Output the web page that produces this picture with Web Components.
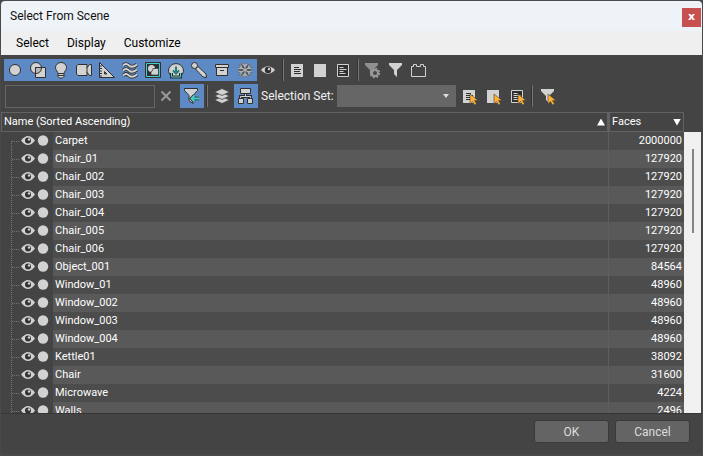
<!DOCTYPE html>
<html lang="en">
<head>
<meta charset="utf-8">
<title>Select From Scene</title>
<style>
html, body { margin: 0; height: 100%; }
body { background: #4a4a4a; font-family: Roboto, "Noto Sans", sans-serif; font-size: 12px; }
</style>
</head>
<body>
<scene-dialog></scene-dialog>
<script>
const D = 'stroke="#303030" stroke-width="1"';
const L = '#d2d2d2';
const cursor = '<path d="M12 9v10l2.500-2.500 2 3.500 2-1-2-3.500h3.500z" fill="#ffb02e" stroke="#454545" stroke-width=".6"/>';
const wave = y => `<path d="M4 ${y}q3-3 6 0t8-1" fill="none" stroke="#303030" stroke-width="3.600"/><path d="M4 ${y}q3-3 6 0t8-1" fill="none" stroke="${L}" stroke-width="1.800"/>`;
const arms = [0, 60, 120, 180, 240, 300].map(a => `<path transform="rotate(${a} 11 11)" d="M11 11V4M8.500 4.500l2.500 3L13.500 4.500"/>`).join('');
const ICONS = {
  circle: `<circle cx="11" cy="11" r="5.500" fill="${L}" ${D}/>`,
  shapes: `<circle cx="9" cy="9" r="5.500" fill="${L}" ${D}/><path d="M8.500 8.500h10v10h-10z" fill="${L}" ${D}/><path d="M8.500 8.500h6a5.500 5.500 0 0 1-6 6z" fill="#b8b8b8" ${D}/>`,
  bulb: `<path d="M8 14.500c0-2-2.500-3-2.500-6a5.500 5 0 0 1 11 0c0 3-2.500 4-2.500 6v3l-1.500 1.500h-3L8 17.500z" fill="${L}" ${D}/><path d="M8 14.500h6M8 16.500h6" ${D}/>`,
  camera: `<path d="M5 5.500h9v3l1-1h0l1.500-2h2v11h-2l-1.500-2h0l-1-1v3H5L3.500 15V7z" fill="${L}" ${D}/><path d="M14 8v6" ${D}/>`,
  ruler: `<path d="M3.500 3.500l15 15h-15z" fill="${L}" ${D}/><path d="M8.500 12.500l2.500 2.500H8.500z" fill="#5d88c0" ${D}/><path d="M4 7h2M4 9.500h2M4 12h2M4 14.500h2M4 17h2" ${D}/>`,
  waves: wave(6.5) + wave(11.5) + wave(16.5),
  group: `<path d="M3.500 3.500h15v15h-15z" fill="#1f5458" stroke="#303030"/><path d="M4.500 4.500h13v13h-13z" fill="#303030" stroke="#44cfc6"/><circle cx="9.500" cy="9.500" r="3.500" fill="${L}"/><path d="M11 9.500h5.500V16H9v-3.500q2 0 2-3z" fill="${L}" stroke="#303030" stroke-width=".7"/>`,
  xref: `<path d="M7 17.500A7.500 7 0 1 1 15 17.500z" fill="${L}" ${D}/><path d="M6.500 14v4h9v-4" fill="none" stroke="#303030" stroke-width="3"/><path d="M6.500 14v4h9v-4" fill="none" stroke="#44cfc6"/><path d="M11 7.500V14M8 11.500l3 3 3-3" fill="none" stroke="#247e7a" stroke-width="2"/>`,
  bone: `<path d="M7.500 10L10 7.500 18 15l.5 3.500L15 18z" fill="${L}" ${D}/><circle cx="6.500" cy="6.500" r="3" fill="${L}" ${D}/>`,
  box: `<path d="M5.500 8.500h11v8h-11z" fill="${L}" ${D}/><path d="M4.500 5.500h13v3h-13z" fill="${L}" ${D}/><path d="M9 11.500h4" ${D}/>`,
  snow: `<g fill="none" stroke="#3f464f" stroke-width="2.600">${arms}</g><g fill="none" stroke="#b4b4b4" stroke-width="1.200">${arms}</g>`,
  eye: `<path d="M4 11q7-7.500 14 0-7 7.500-14 0z" fill="${L}"/><circle cx="11" cy="11" r="3.200" fill="#303030"/><circle cx="12" cy="10" r="1.200" fill="${L}"/>`,
  page: `<path d="M5 5h12v13H5z" fill="${L}"/><path d="M8 8.500h5M8 10.500h7M8 12.500h6M8 14.500h7" ${D}/>`,
  blank: `<path d="M5 5h12v13H5z" fill="${L}"/>`,
  pageDark: `<path d="M5.500 5.500h11v12h-11z" fill="#303030" stroke="${L}"/><path d="M7.500 8.500h4M7.500 10.500h7M7.500 12.500h4M7.500 14.500h6" stroke="${L}"/>`,
  filterGear: `<path d="M4 4h13v2l-5 5v7l-3-2v-5L4 6z" fill="#8f8f8f"/><circle cx="14" cy="14" r="3" fill="#454545" stroke="#999" stroke-width="2"/><circle cx="14" cy="14" r="4.500" fill="none" stroke="#999" stroke-width="1.500" stroke-dasharray="2 1.500"/>`,
  filter: `<path d="M5 4h13v2l-5 5v7l-3-3v-4L5 6z" fill="${L}"/>`,
  brick: `<path d="M4.500 7.500h2v-2h3v2h4v-2h3v2h2v10h-14z" fill="none" stroke="${L}" stroke-width="1"/>`,
  clear: `<path d="M6.500 6.500l9 9M15.500 6.500l-9 9" stroke="#9a9a9a" stroke-width="2"/>`,
  filterBack: `<path d="M4.500 3.500h13v2l-4.500 5v8l-4-3v-5l-4.500-5z" fill="${L}" ${D}/><path d="M19 13.500h-7M14.500 10.500l-3 3 3 3" fill="none" stroke="#303030" stroke-width="3.500"/><path d="M19 13.500h-7M14.500 10.500l-3 3 3 3" fill="none" stroke="#44cfc6" stroke-width="1.800"/>`,
  layers: `<g fill="${L}" stroke="#454545" stroke-width=".8"><path d="M11 11.500l7.500 3.500-7.500 3.500L3.500 15z"/><path d="M11 7.500l7.500 3.500-7.500 3.500L3.500 11z"/><path d="M11 3.500L18.500 7 11 10.500 3.500 7z"/></g>`,
  tree: `<path d="M11.500 8v3.500M6.500 14v-2.500h10V14" fill="none" stroke="#303030" stroke-width="3"/><path d="M11.500 8v3.500M6.500 14v-2.500h10V14" fill="none" stroke="${L}"/><path d="M6.500 3.500h10v5h-10zM4.500 13.500h5v5h-5zM13.500 13.500h5v5h-5z" fill="${L}" ${D}/>`,
};
ICONS.pageCursor = ICONS.page + cursor;
ICONS.blankCursor = ICONS.blank + cursor;
ICONS.pageDarkCursor = ICONS.pageDark + cursor;
ICONS.filterCursor = ICONS.filter + cursor;

function define(name, html) {
  customElements.define(name, class extends HTMLElement {
    constructor() {
      super();
      this.attachShadow({ mode: 'open' }).innerHTML = typeof html === 'function' ? html(this) : html;
    }
  });
}

define('tool-button', el => `
<style>
:host { display: block; flex: none; }
button { display: block; width: 23px; height: 22px; border: 0; padding: 0; background: none; }
:host([pressed]) button { background: #5d8ac4; }
:host([tall]) button { width: 24px; height: 24px; padding: 1px 0; }
svg { display: block; width: 23px; height: 22px; }
</style>
<button type="button" aria-label="${el.getAttribute('label')}" aria-pressed="${el.hasAttribute('pressed')}"><svg viewBox="0 0 23 22" aria-hidden="true">${ICONS[el.getAttribute('icon')]}</svg></button>`);

define('tool-separator', `
<style>:host { display: block; flex: none; width: 1px; height: 22px; margin: 0 2px; background: #777; border-left: 1px solid #333; }</style>`);

define('title-bar', `
<style>
:host { display: flex; align-items: center; justify-content: space-between; height: 30px; padding: 0 1px 0 9px; background: #eef3f7; color: #111; border-radius: 4px 4px 0 0; }
h1 { margin: 0; font-size: 12px; font-weight: 400; line-height: 16px; }
button { width: 19px; height: 19px; margin-top: 3px; border: 0; padding: 0 0 2px; background: #c75050; color: #fff; font: 700 11px/16px "DejaVu Sans", sans-serif; }
</style>
<h1><slot></slot></h1><button type="button" aria-label="Close">x</button>`);

define('menu-bar', `
<style>
:host { display: flex; gap: 18px; align-items: center; height: 24px; padding: 0 15px; background: #efefef; }
button { border: 0; padding: 0; background: none; color: #000; font: inherit; line-height: 16px; }
</style>
<button type="button">Select</button><button type="button">Display</button><button type="button">Customize</button>`);

const tools = (list, flag = '') => list.map(([i, l]) => `<tool-button icon="${i}" label="${l}" ${flag}></tool-button>`).join('');

define('filter-toolbar', `
<style>:host { display: flex; padding: 4px 3px 3px; }</style>
${tools([['circle','Geometry'],['shapes','Shapes'],['bulb','Lights'],['camera','Cameras'],['ruler','Helpers'],['waves','Space warps'],['group','Groups'],['xref','Object XRefs'],['bone','Bones'],['box','Containers'],['snow','Frozen objects']], 'pressed')}
${tools([['eye','Hidden objects']])}
<tool-separator></tool-separator>
${tools([['page','Display all'],['blank','Display none'],['pageDark','Invert display']])}
<tool-separator></tool-separator>
${tools([['filterGear','Advanced filter'],['filter','Filter combination'],['brick','Layout']])}`);

define('search-toolbar', `
<style>
:host { display: flex; align-items: center; height: 24px; padding: 0 4px; color: #f0f0f0; }
input { box-sizing: border-box; flex: none; width: 150px; height: 23px; border: 1px solid #666; background: #444; color: #eee; padding: 0 4px; font: inherit; }
.find { display: flex; align-items: center; gap: 0 2px; }
.find input { margin-right: -2px; }
tool-separator { margin-right: 3px; }
label { flex: none; width: 79px; box-sizing: border-box; padding-left: 3px; line-height: 16px; white-space: nowrap; }
.combo { flex: none; display: grid; align-items: center; width: 119px; height: 22px; margin-right: 2px; background: #666; }
.combo > * { grid-area: 1 / 1; }
select { appearance: none; width: 100%; height: 22px; border: 0; background: none; color: #eee; font: inherit; padding: 0 16px 0 4px; }
.arrow { justify-self: end; width: 6px; height: 4px; margin-right: 7px; background: #ddd; clip-path: polygon(0 0, 100% 0, 50% 100%); pointer-events: none; }
.picks { display: flex; gap: 1px; }
</style>
<div class="find"><input type="search" aria-label="Find">
${tools([['clear','Clear search']])}
${tools([['filterBack','Select matches']], 'pressed tall')}</div>
<tool-separator></tool-separator>
${tools([['layers','Sort by layer']])}
${tools([['tree','Sort by hierarchy']], 'pressed tall')}
<label for="set">Selection Set:</label>
<div class="combo"><select id="set"><option></option></select><span class="arrow"></span></div>
<div class="picks">${tools([['pageCursor','Select all'],['blankCursor','Select none'],['pageDarkCursor','Select invert']])}</div>
<tool-separator></tool-separator>
${tools([['filterCursor','Select by filter']])}`);

const rows = [['Carpet',2000000],['Chair_01',127920],['Chair_002',127920],['Chair_003',127920],['Chair_004',127920],['Chair_005',127920],['Chair_006',127920],['Object_001',84564],['Window_01',48960],['Window_002',48960],['Window_003',48960],['Window_004',48960],['Kettle01',38092],['Chair',31600],['Microwave',4224],['Walls',2496]];
define('scene-table', `
<style>
:host { display: block; flex: 1; min-width: 0; overflow: hidden; color: #fff; font-size: 11px; line-height: 16px; }
table { width: 100%; table-layout: fixed; border-collapse: separate; border-spacing: 0; }
.tree { width: 52px; } .faces { width: 76px; }
th { box-sizing: border-box; height: 20px; padding: 0 2px; border: 1px solid #626262; text-align: left; font-weight: 400; }
th + th { border-left: 2px solid #626262; }
th div { display: flex; align-items: center; justify-content: space-between; }
th i { width: 8px; height: 7px; background: #fff; clip-path: polygon(50% 0, 100% 100%, 0 100%); }
th i.down { clip-path: polygon(0 0, 100% 0, 50% 100%); }
td { height: 18px; padding: 0 2px; line-height: 18px; overflow: hidden; white-space: nowrap; background: #4c4c4c; }
tbody tr:nth-child(even) td { background: #595959; }
tbody tr td.node { padding: 0; background: #444; }
td.node svg { display: block; width: 52px; height: 18px; }
td.num { text-align: right; border-left: 1px solid #5e5e5e; }
</style>
<table>
<colgroup><col class="tree"><col><col class="faces"></colgroup>
<thead><tr><th colspan="2" scope="col"><div>Name (Sorted Ascending)<i></i></div></th><th scope="col"><div>Faces<i class="down"></i></div></th></tr></thead>
<tbody>${rows.map(([n, f], k) => `<tr><td class="node"><svg viewBox="0 0 52 18" aria-hidden="true">
<path d="M10.500 ${k ? 0 : 9}V18M11 9.500h8" fill="none" stroke="#777" stroke-dasharray="1 1"/>
<path d="M20 8.500q7-9 14 0-7 9-14 0z" fill="${L}"/><circle cx="27" cy="8.500" r="3" fill="#333"/><circle cx="28" cy="7.500" r="1.200" fill="${L}"/>
<circle cx="42" cy="8.500" r="5.200" fill="${L}"/></svg></td><td>${n}</td><td class="num">${f}</td></tr>`).join('')}</tbody>
</table>`);

define('scroll-track', `
<style>
:host { display: flex; flex-direction: column; flex: none; align-items: center; width: 17px; margin: 20px 1px 0 0; background: #f0f0f0; }
div { width: 2px; height: 30%; margin-top: 17px; background: #868686; }
</style><div></div>`);

define('push-button', `
<style>
:host { display: block; }
button { box-sizing: border-box; width: 75px; height: 23px; border: 1px solid #3a3a3a; border-radius: 3px; padding: 0; background: #646464; color: #ddd; font: inherit; line-height: 16px; }
</style><button type="button"><slot></slot></button>`);

define('scene-dialog', `
<style>
:host { display: flex; flex-direction: column; box-sizing: border-box; height: 100vh; padding: 1px 1px 2px; }
main { display: flex; flex-direction: column; flex: 1; min-height: 0; background: #444; border-radius: 0 0 4px 4px; }
.list { display: flex; flex: 1; min-height: 0; margin-top: 4px; border-bottom: 1px solid #363636; }
footer { display: flex; justify-content: flex-end; gap: 6px; padding: 6px 12px 11px; }
</style>
<title-bar>Select From Scene</title-bar>
<menu-bar></menu-bar>
<main>
<filter-toolbar></filter-toolbar>
<search-toolbar></search-toolbar>
<section class="list" aria-label="Scene objects"><scene-table></scene-table><scroll-track></scroll-track></section>
<footer><push-button>OK</push-button><push-button>Cancel</push-button></footer>
</main>`);
</script>
</body>
</html>
